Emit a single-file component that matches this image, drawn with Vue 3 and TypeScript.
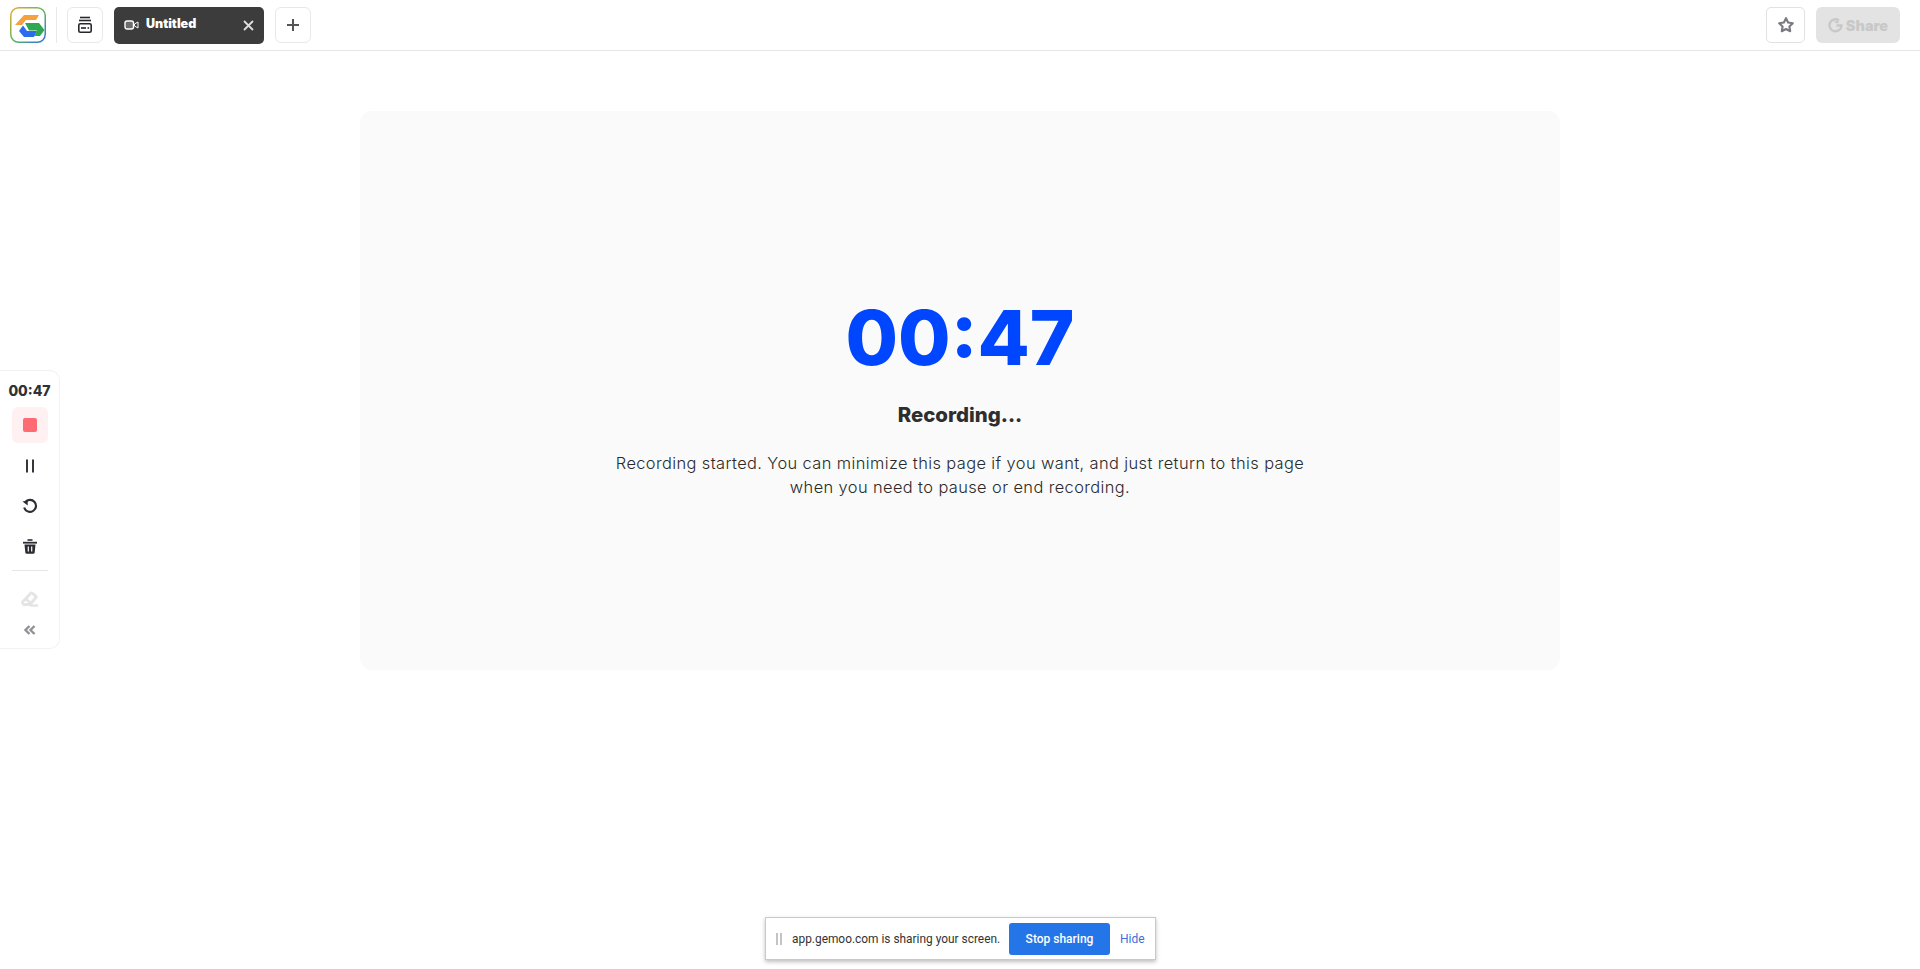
<template>
  <div class="page">
    <header class="topbar">
      <div class="logo">
        <svg width="36" height="36" viewBox="0 0 36 36" fill="none">
          <defs>
            <linearGradient id="ring" x1="0" y1="0" x2="36" y2="36" gradientUnits="userSpaceOnUse">
              <stop offset="0" stop-color="#f5a623" />
              <stop offset="0.5" stop-color="#5fb85a" />
              <stop offset="1" stop-color="#2f6df0" />
            </linearGradient>
          </defs>
          <rect x="0.75" y="0.75" width="34.5" height="34.5" rx="8" fill="#fff" stroke="url(#ring)" stroke-width="1.5" />
          <path d="M14 8H29L26 13H16L12 18H5z" fill="#f7a13c" />
          <path d="M13 18.5L17 24H27L24 30H14L9 24z" fill="#2c6bed" />
          <path d="M15 16H29L34.5 23L30 29H24.5L27 23.5H19z" fill="#2fa84f" />
        </svg>
      </div>
      <span class="vline"></span>
      <button class="sq-btn">
        <svg width="18" height="18" viewBox="0 0 18 18" fill="none">
          <path d="M4 1.5h10" stroke="#26262b" stroke-width="1.6" />
          <path d="M3 4.5h12" stroke="#26262b" stroke-width="1.6" />
          <rect x="2.8" y="7.8" width="12.4" height="8.4" rx="1.5" stroke="#26262b" stroke-width="1.6" />
          <rect x="5" y="11.2" width="5" height="1.6" fill="#26262b" />
          <rect x="11.5" y="11.2" width="1.6" height="1.6" fill="#26262b" />
        </svg>
      </button>
      <div class="tab">
        <svg width="15" height="12" viewBox="0 0 15 12" fill="none">
          <rect x="1" y="2" width="8.5" height="8" rx="2" stroke="#fff" stroke-width="1.4" fill="#fff" fill-opacity="0.25" />
          <path d="M10.5 5l3.5-2v6l-3.5-2z" stroke="#fff" fill="none" />
        </svg>
        <span class="tab-title">Untitled</span>
        <svg class="tab-close" width="11" height="11" viewBox="0 0 11 11" fill="none">
          <path d="M1 1l9 9M10 1l-9 9" stroke="#ddd" stroke-width="1.8" />
        </svg>
      </div>
      <button class="sq-btn">
        <svg width="14" height="14" viewBox="0 0 14 14" fill="none">
          <path d="M7 1v12M1 7h12" stroke="#555" stroke-width="2" />
        </svg>
      </button>
      <div class="spacer"></div>
      <button class="star-btn">
        <svg width="18" height="18" viewBox="0 0 18 18" fill="none">
          <path d="M9 2.2l2.1 4.3 4.7.7-3.4 3.3.8 4.7L9 13l-4.2 2.2.8-4.7-3.4-3.3 4.7-.7z" stroke="#7a7a80" stroke-width="2.1" stroke-linejoin="round" />
        </svg>
      </button>
      <button class="share-btn">
        <svg width="15" height="15" viewBox="0 0 15 15" fill="none">
          <path d="M11 2.4A6 6 0 1 0 13.5 7.5H8.5" stroke="#c8c8c8" stroke-width="2.4" />
          <path d="M7 4.5a3 3 0 0 1 3.5 .3" stroke="#c8c8c8" stroke-width="1.8" />
        </svg>
        <span>Share</span>
      </button>
    </header>

    <main class="content">
      <section class="card">
        <div class="timer">{{ elapsed }}</div>
        <div class="status">Recording...</div>
        <p class="hint">
          Recording started. You can minimize this page if you want, and just return to this page<br />
          when you need to pause or end recording.
        </p>
      </section>
    </main>

    <aside class="toolbar">
      <div class="tool-time">{{ elapsed }}</div>
      <button class="tool stop"><span class="stop-square"></span></button>
      <button class="tool">
        <svg width="12" height="14" viewBox="0 0 12 14" fill="none">
          <path d="M3 0.5v13M9 0.5v13" stroke="#33363c" stroke-width="2" />
        </svg>
      </button>
      <button class="tool undo">
        <svg width="18" height="18" viewBox="0 0 18 18" fill="none">
          <path d="M4.2 5.2A6 6 0 1 1 3.2 10.5" stroke="#2b2d33" stroke-width="2.1" />
          <path d="M1.5 4.6l5.2 -1.2v5z" fill="#2b2d33" />
        </svg>
      </button>
      <button class="tool">
        <svg width="16" height="16" viewBox="0 0 16 16" fill="none">
          <path d="M1 3.7h14" stroke="#2b2d33" stroke-width="1.8" />
          <path d="M5.5 1h5" stroke="#2b2d33" stroke-width="1.6" />
          <path d="M2.5 5.5h11l-.8 8a1.5 1.5 0 0 1-1.5 1.3H4.8a1.5 1.5 0 0 1-1.5-1.3z" fill="#2b2d33" />
          <path d="M6.3 7.5v5M9.7 7.5v5" stroke="#fff" stroke-width="1.2" />
        </svg>
      </button>
      <div class="tool-line"></div>
      <button class="tool eraser">
        <svg width="18" height="16" viewBox="0 0 18 16" fill="none">
          <path d="M3 9.5l6.5-7a1.5 1.5 0 0 1 2-.2l3 2.6a1.5 1.5 0 0 1 .1 2.1L9 13.5H4.5a2 2 0 0 1-1.5-4z" stroke="#e4e4e6" stroke-width="2.8" stroke-linejoin="round" />
          <path d="M9 14.5h8" stroke="#e4e4e6" stroke-width="2.4" />
          <path d="M5 8l5 4.5" stroke="#e4e4e6" stroke-width="2.4" />
        </svg>
      </button>
      <button class="tool collapse">
        <svg width="12" height="10" viewBox="0 0 12 10" fill="none">
          <path d="M5.5 1L1.5 5l4 4M10.5 1l-4 4 4 4" stroke="#8f9196" stroke-width="2.4" />
        </svg>
      </button>
    </aside>

    <div class="sharing">
      <span class="grip"></span>
      <span class="sharing-text">app.gemoo.com is sharing your screen.</span>
      <button class="stop-sharing">Stop sharing</button>
      <a class="hide">Hide</a>
    </div>
  </div>
</template>

<script setup lang="ts">
import { ref } from 'vue';

const elapsed = ref('00:47');
</script>

<style>
html,
body {
  margin: 0;
  background: #fff;
}
</style>

<style scoped>
.page {
  height: 969px;
  overflow: hidden;
  position: relative;
  font-family: Inter, "Liberation Sans", sans-serif;
  color: #2e2e2e;
}

button {
  border: none;
  background: none;
  padding: 0;
  font-family: inherit;
}

.topbar {
  height: 50px;
  display: flex;
  align-items: center;
  padding: 0 20px 0 10px;
  border-bottom: 1px solid #e6e6e6;
}

.logo {
  width: 36px;
  height: 36px;
}

.vline {
  width: 1px;
  height: 36px;
  background: #e8e8e8;
  margin: 0 10px;
}

.sq-btn {
  width: 36px;
  height: 36px;
  box-sizing: border-box;
  border: 1px solid #e8e8e8;
  border-radius: 6px;
  display: flex;
  align-items: center;
  justify-content: center;
}

.tab {
  width: 150px;
  height: 37px;
  margin: 0 11px;
  box-sizing: border-box;
  background: #3c3c3c;
  border-radius: 5px;
  display: flex;
  align-items: center;
  padding: 0 10px;
  color: #fff;
}

.tab-title {
  margin-left: 7px;
  margin-top: -3px;
  font-size: 12.5px;
  font-weight: 900;
}

.tab-close {
  margin-left: auto;
}

.spacer {
  flex: 1;
}

.star-btn {
  width: 39px;
  height: 36px;
  box-sizing: border-box;
  border: 1.5px solid #e2e2e2;
  border-radius: 5px;
  display: flex;
  align-items: center;
  justify-content: center;
}

.share-btn {
  width: 84px;
  height: 36px;
  margin-left: 11px;
  background: #e3e3e3;
  border-radius: 6px;
  display: flex;
  align-items: center;
  justify-content: center;
  gap: 3px;
  color: #c8c8c8;
  font-size: 14.5px;
  font-weight: 900;
}

.content {
  padding-top: 60px;
  display: flex;
  justify-content: center;
}

.card {
  width: 1200px;
  height: 559px;
  box-sizing: border-box;
  padding-top: 176px;
  background: #fafafa;
  border-radius: 12px;
  display: flex;
  flex-direction: column;
  align-items: center;
}

.timer {
  font-size: 76px;
  line-height: 100px;
  font-weight: 800;
  color: #0046ff;
}

.status {
  margin-top: 13px;
  font-size: 20.4px;
  line-height: 30px;
  font-weight: 800;
  color: #2e2e2e;
}

.hint {
  margin: 22px 0 0;
  font-size: 16.4px;
  line-height: 23.5px;
  letter-spacing: 0.4px;
  font-weight: 300;
  text-align: center;
  color: #2a2a2a;
}

.toolbar {
  position: absolute;
  left: 0;
  top: 370px;
  width: 60px;
  height: 279px;
  box-sizing: border-box;
  padding-top: 11px;
  background: #fff;
  border: 1px solid #f2f2f2;
  border-left: none;
  border-radius: 0 10px 10px 0;
  display: flex;
  flex-direction: column;
  align-items: center;
}

.tool-time {
  font-size: 14px;
  line-height: 18px;
  font-weight: 800;
  color: #2e3238;
}

.tool {
  width: 36px;
  height: 36px;
  margin-top: 5px;
  border-radius: 6px;
  display: flex;
  align-items: center;
  justify-content: center;
  flex: none;
}

.stop {
  margin-top: 7px;
  background: #fff1f1;
}

.undo {
  margin-top: 4px;
}

.stop-square {
  width: 14px;
  height: 14px;
  border-radius: 2px;
  background: #ff6b72;
}

.tool-line {
  width: 36px;
  height: 1px;
  margin-top: 5px;
  background: #e6e6e6;
}

.eraser {
  margin-top: 10px;
}

.collapse {
  height: 14px;
  margin-top: 6px;
}

.sharing {
  position: absolute;
  left: 765px;
  top: 917px;
  width: 391px;
  height: 43px;
  box-sizing: border-box;
  background: #fff;
  border: 1px solid #c9c9c9;
  box-shadow: 0 2px 4px rgba(0, 0, 0, 0.25);
  display: flex;
  align-items: center;
  padding-left: 10px;
  font-family: Roboto, "Liberation Sans", sans-serif;
  font-size: 12px;
}

.grip {
  width: 2px;
  height: 12px;
  border-left: 2px solid #c4c4c4;
  border-right: 2px solid #c4c4c4;
  margin-right: 10px;
}

.sharing-text {
  width: 217px;
  flex: none;
  color: #333;
  white-space: nowrap;
  font-size: 11.9px;
}

.stop-sharing {
  width: 101px;
  height: 32px;
  background: #2475e8;
  border-radius: 3px;
  color: #fff;
  font-size: 12px;
  font-weight: 500;
}

.hide {
  margin-left: 10px;
  color: #3d6fd8;
}
</style>
